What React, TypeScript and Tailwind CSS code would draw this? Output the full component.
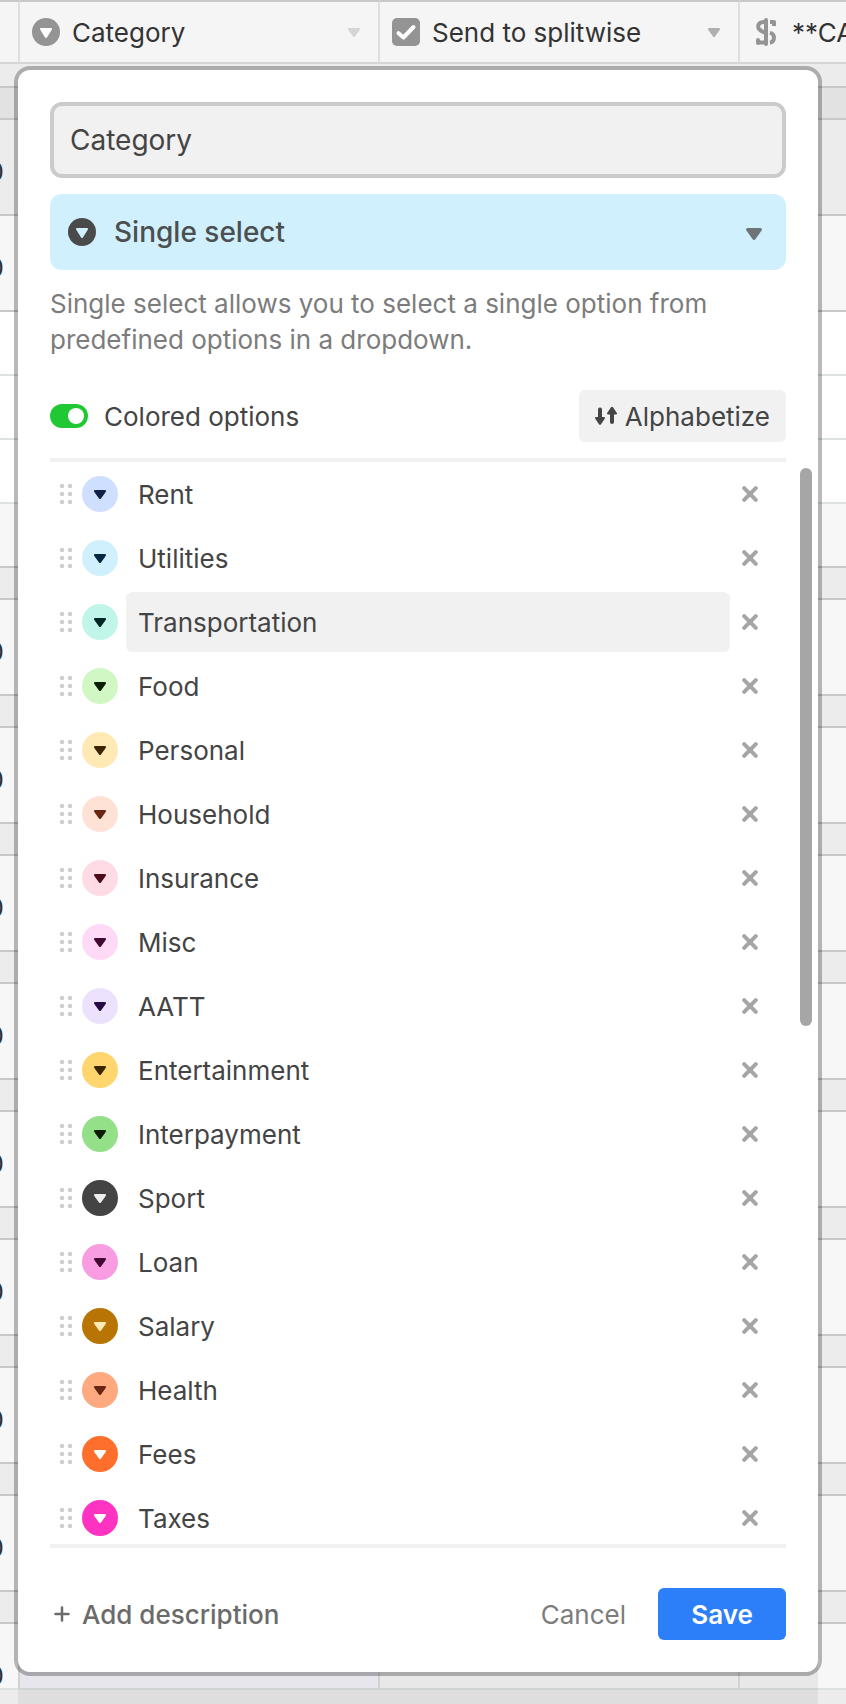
import React from "react";

interface Option {
  name: string;
  color: string;
  caret: string;
  active?: boolean;
}

interface Row {
  height: string;
  tone: string;
  line: string;
  value?: string;
  cells?: boolean;
}

const options: Option[] = [
  { name: "Rent", color: "bg-[#cfdfff]", caret: "text-[#102046]" },
  { name: "Utilities", color: "bg-[#d0f0fd]", caret: "text-[#04283f]" },
  { name: "Transportation", color: "bg-[#c2f5e9]", caret: "text-[#012524]", active: true },
  { name: "Food", color: "bg-[#d1f7c4]", caret: "text-[#0b1d05]" },
  { name: "Personal", color: "bg-[#ffeab6]", caret: "text-[#3b2501]" },
  { name: "Household", color: "bg-[#fee2d5]", caret: "text-[#6b2613]" },
  { name: "Insurance", color: "bg-[#ffdce5]", caret: "text-[#4c0c1c]" },
  { name: "Misc", color: "bg-[#ffdaf6]", caret: "text-[#400832]" },
  { name: "AATT", color: "bg-[#ede2fe]", caret: "text-[#280b42]" },
  { name: "Entertainment", color: "bg-[#ffd66e]", caret: "text-[#3b2501]" },
  { name: "Interpayment", color: "bg-[#93e088]", caret: "text-[#0b1d05]" },
  { name: "Sport", color: "bg-[#444444]", caret: "text-[#eeeeee]" },
  { name: "Loan", color: "bg-[#f99de2]", caret: "text-[#400832]" },
  { name: "Salary", color: "bg-[#b87503]", caret: "text-[#ffeab6]" },
  { name: "Health", color: "bg-[#ffa981]", caret: "text-[#6b2613]" },
  { name: "Fees", color: "bg-[#ff6f2c]", caret: "text-white" },
  { name: "Taxes", color: "bg-[#ff33c2]", caret: "text-white" },
];

const dark = "border-[#c8c8c8]";
const light = "border-[#dde1e2]";

const group: Row = { height: "h-8", tone: "bg-[#ececec]", line: dark };
const total: Row = { height: "h-24", tone: "bg-[#f7f7f7]", line: dark, value: "0" };

const rows: Row[] = [
  { height: "h-6", tone: "bg-[#ececec]", line: dark },
  { height: "h-8", tone: "bg-[#e2e2e2]", line: dark },
  { height: "h-24", tone: "bg-[#ececec]", line: dark, value: "0" },
  { height: "h-24", tone: "bg-[#f7f7f7]", line: dark, value: "0" },
  { height: "h-16", tone: "bg-white", line: light },
  { height: "h-16", tone: "bg-white", line: light },
  { height: "h-16", tone: "bg-white", line: light },
  { height: "h-16", tone: "bg-[#f7f7f7]", line: dark },
  ...Array.from({ length: 8 }, () => [group, total]).flat(),
  group,
  { height: "h-[66px]", tone: "bg-[#f7f7f7]", line: light, value: "0", cells: true },
  { height: "h-24", tone: "bg-[#ececec]", line: dark },
];

const Caret = ({ className }: { className: string }) => (
  <svg viewBox="0 0 12 9" className={className} fill="currentColor" aria-hidden="true">
    <path d="M1.2 0h9.6c1 0 1.5 1.1.9 1.9L7 8.4c-.5.7-1.5.7-2 0L.3 1.9C-.3 1.1.2 0 1.2 0z" />
  </svg>
);

const SelectIcon = ({ className }: { className: string }) => (
  <svg viewBox="0 0 28 28" className={className} aria-hidden="true">
    <circle cx="14" cy="14" r="14" fill="currentColor" />
    <path
      d="M8.9 10h10.2c.8 0 1.2.8.8 1.4l-5 8.1c-.4.7-1.4.7-1.8 0l-5-8.1c-.4-.6 0-1.4.8-1.4z"
      className="fill-(--hole)"
    />
  </svg>
);

const CheckIcon = () => (
  <svg viewBox="0 0 28 28" className="size-7 shrink-0" aria-hidden="true">
    <rect width="28" height="28" rx="5" fill="#949494" />
    <path d="M6.5 15.2l5 4.3L21.5 9" fill="none" stroke="#fff" strokeWidth="4" strokeLinecap="round" strokeLinejoin="round" />
  </svg>
);

const DollarIcon = () => (
  <svg viewBox="0 0 20 28" className="h-7 w-5 shrink-0" fill="none" stroke="#949494" strokeWidth="4" aria-hidden="true">
    <path d="M10 2v24" strokeLinecap="round" />
    <path d="M10 4H7.5C4 4 2.2 6 2.2 8.6c0 2.6 1.8 4 4.8 5.2l3 1.2M10 24.5H2" />
    <path d="M2 22v3" strokeLinecap="round" />
    <path d="M14 4H18v4" strokeLinejoin="round" />
    <path d="M14 14.5c2.5 1 4 2.5 4 5 0 2.8-1.5 4.7-4 5.3" />
  </svg>
);

const SortIcon = () => (
  <svg viewBox="0 0 22 20" className="h-5 w-[22px]" fill="currentColor" aria-hidden="true">
    <path d="M3 3.5a2 2 0 0 1 4 0V11h2c1 0 1.3 1 .7 1.7L6 18.3c-.5.7-1.5.7-2 0L.3 12.7C-.3 12 0 11 1 11h2z" />
    <path d="M15 16a2 2 0 0 0 4 0V8.500h2c1 0 1.300-1 .7-1.700L18 1.200c-.5-.7-1.500-.7-2 0l-3.700 5.600c-.6.700-.3 1.700.7 1.700h2z" />
  </svg>
);

const Grip = () => (
  <svg viewBox="0 0 12 20" className="ml-[10px] h-5 w-3 shrink-0" fill="#cfcfcf" aria-hidden="true">
    {[0, 8, 16].map((y) => (
      <React.Fragment key={y}>
        <rect x="0" y={y} width="4" height="4" rx="1" />
        <rect x="8" y={y} width="4" height="4" rx="1" />
      </React.Fragment>
    ))}
  </svg>
);

const GridTable = () => (
  <table className="w-full table-fixed border-separate border-spacing-0 text-[26px] text-[#333333]">
    <colgroup>
      <col className="w-5" />
      <col className="w-[360px]" />
      <col className="w-[360px]" />
      <col />
    </colgroup>
    <thead>
      <tr className="h-16 bg-[#f5f5f5] text-left [&>th]:border-y-2 [&>th]:border-t-[#c8c8c8] [&>th]:border-b-[#d5d5d5] [&>th]:p-0 [&>th]:font-normal">
        <th className="border-r-2 border-r-[#dcdfe1]" aria-label="Amount" />
        <th className="border-r-2 border-r-[#dcdfe1]">
          <div className="flex items-center pr-[18px] pl-3">
            <SelectIcon className="size-7 shrink-0 text-[#949494] [--hole:#fff]" />
            <span className="ml-3 flex-1">Category</span>
            <Caret className="h-[9px] w-3 text-[#d5d5d5]" />
          </div>
        </th>
        <th className="border-r-2 border-r-[#dcdfe1]">
          <div className="flex items-center pr-[18px] pl-3">
            <CheckIcon />
            <span className="ml-3 flex-1">Send to splitwise</span>
            <Caret className="h-[9px] w-3 text-[#b0b0b0]" />
          </div>
        </th>
        <th className="overflow-hidden">
          <div className="flex items-center pl-4 whitespace-nowrap">
            <DollarIcon />
            <span className="ml-4">**CA</span>
          </div>
        </th>
      </tr>
    </thead>
    <tbody>
      {rows.map((row, i) => (
        <tr key={i} className={`${row.height} ${row.tone}`}>
          <td className={`border-b-2 p-0 align-top ${row.line} ${row.cells ? "border-r-2" : ""}`}>
            {row.value && (
              <div className={`mt-10 flex justify-end leading-6 ${row.cells ? "pr-[14px]" : "pr-4"}`}>
                {row.value}
              </div>
            )}
          </td>
          <td className={`border-b-2 p-0 ${row.line} ${row.cells ? "border-r-2 bg-[#f6f5fb]" : ""}`} />
          <td className={`border-b-2 p-0 ${row.line} ${row.cells ? "border-r-2" : ""}`} />
          <td className={`border-b-2 p-0 ${row.line}`} />
        </tr>
      ))}
    </tbody>
  </table>
);

const OptionRow = ({ option }: { option: Option }) => (
  <li className="flex h-[60px] shrink-0 items-center">
    <Grip />
    <button
      type="button"
      aria-label={`Color of ${option.name}`}
      className={`ml-[10px] flex size-9 shrink-0 items-center justify-center rounded-full ${option.color} ${option.caret}`}
    >
      <Caret className="h-[9px] w-3" />
    </button>
    <input
      type="text"
      aria-label={`Option ${option.name}`}
      defaultValue={option.name}
      className={`ml-2 h-full min-w-0 flex-1 rounded-md px-3 outline-none ${option.active ? "bg-[#f1f1f1]" : ""}`}
    />
    <button type="button" aria-label={`Remove ${option.name}`} className="mr-7 ml-3 text-[#a5a5a5]">
      <svg viewBox="0 0 16 16" className="size-4" fill="none" stroke="currentColor" strokeWidth="4" strokeLinecap="round">
        <path d="M2.2 2.2l11.6 11.6M13.8 2.2L2.2 13.8" />
      </svg>
    </button>
  </li>
);

const FieldEditor = () => (
  <form className="absolute top-[70px] right-7 bottom-8 left-[18px] flex flex-col rounded-xl bg-white p-8 text-[26px] text-[#444444] shadow-[0_0_0_4px_rgba(0,0,0,0.27),0_60px_0_0_rgba(0,0,0,0.06)]">
    <input
      type="text"
      aria-label="Field name"
      defaultValue="Category"
      className="h-[76px] w-full shrink-0 rounded-xl border-4 border-[#c9cbcc] bg-[#f1f1f1] px-4 text-[28px] outline-none"
    />

    <div className="relative mt-4 shrink-0">
      <select
        aria-label="Field type"
        className="h-[76px] w-full appearance-none rounded-xl bg-[#d0f0fd] pr-12 pl-16 text-[28px] font-medium text-[#4c4f50] outline-none"
      >
        <option>Single select</option>
      </select>
      <SelectIcon className="pointer-events-none absolute top-6 left-[18px] size-7 text-[#4a4a4a] [--hole:#d0f0fd]" />
      <Caret className="pointer-events-none absolute top-[34px] right-6 h-3 w-4 text-[#6c7478]" />
    </div>

    <p className="mt-4 leading-9 text-[#7c7c7c]">
      Single select allows you to select a single option from predefined options in a dropdown.
    </p>

    <div className="mt-8 flex items-center justify-between">
      <label className="flex items-center gap-4">
        <input
          type="checkbox"
          role="switch"
          defaultChecked
          className="flex h-6 w-[38px] appearance-none items-center justify-end rounded-full bg-[#20c933] px-1 before:size-4 before:rounded-full before:bg-white"
        />
        Colored options
      </label>
      <button type="button" className="flex h-[52px] items-center gap-2 rounded-md bg-[#f1f1f1] px-4">
        <SortIcon />
        Alphabetize
      </button>
    </div>

    <ul className="mt-4 flex min-h-0 flex-1 flex-col gap-1 overflow-hidden border-y-4 border-[#f1f1f1] pt-[2px]">
      {options.map((option) => (
        <OptionRow key={option.name} option={option} />
      ))}
    </ul>
    {/* scroll thumb of the option list */}
    <div className="absolute top-[398px] right-[6px] h-[558px] w-3 rounded-full bg-[#a6a6a6]" />

    <div className="mt-10 flex items-center">
      <button type="button" className="flex items-center gap-3 pl-1 font-medium text-[#6b6b6b]">
        <svg viewBox="0 0 16 16" className="size-4" fill="none" stroke="currentColor" strokeWidth="2.5" strokeLinecap="round">
          <path d="M8 1.5v13M1.5 8h13" />
        </svg>
        Add description
      </button>
      <button type="button" className="mr-8 ml-auto text-[#7c7c7c]">
        Cancel
      </button>
      <button type="submit" className="h-[52px] w-32 rounded-md bg-[#2d7ff9] font-semibold text-white">
        Save
      </button>
    </div>
  </form>
);

export default function App() {
  return (
    <div className="relative h-screen overflow-hidden bg-white font-['Inter',sans-serif]">
      <GridTable />
      <FieldEditor />
    </div>
  );
}
